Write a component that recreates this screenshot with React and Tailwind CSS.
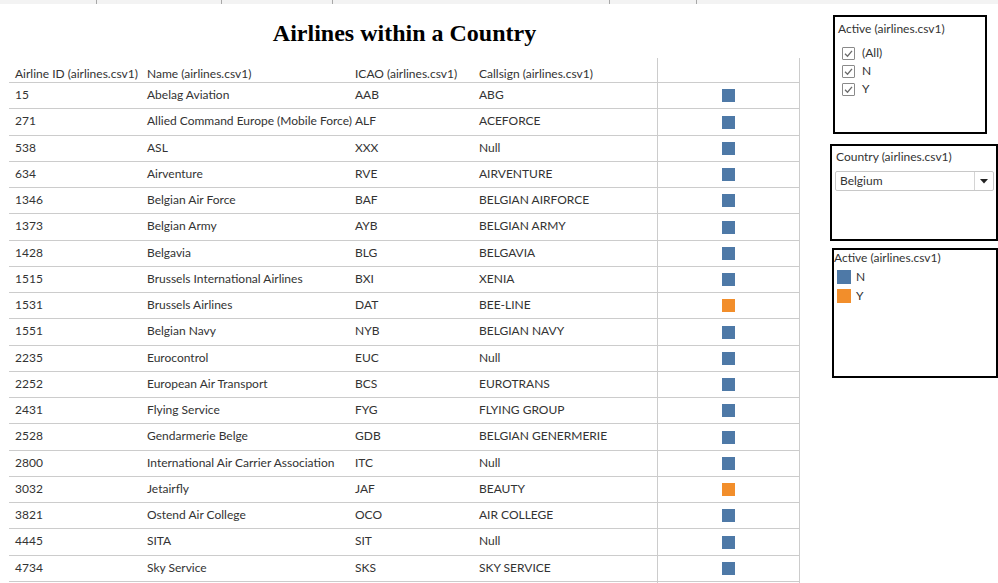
import React from 'react';

const rows = [
  ['15', 'Abelag Aviation', 'AAB', 'ABG', 'N'],
  ['271', 'Allied Command Europe (Mobile Force)', 'ALF', 'ACEFORCE', 'N'],
  ['538', 'ASL', 'XXX', 'Null', 'N'],
  ['634', 'Airventure', 'RVE', 'AIRVENTURE', 'N'],
  ['1346', 'Belgian Air Force', 'BAF', 'BELGIAN AIRFORCE', 'N'],
  ['1373', 'Belgian Army', 'AYB', 'BELGIAN ARMY', 'N'],
  ['1428', 'Belgavia', 'BLG', 'BELGAVIA', 'N'],
  ['1515', 'Brussels International Airlines', 'BXI', 'XENIA', 'N'],
  ['1531', 'Brussels Airlines', 'DAT', 'BEE-LINE', 'Y'],
  ['1551', 'Belgian Navy', 'NYB', 'BELGIAN NAVY', 'N'],
  ['2235', 'Eurocontrol', 'EUC', 'Null', 'N'],
  ['2252', 'European Air Transport', 'BCS', 'EUROTRANS', 'N'],
  ['2431', 'Flying Service', 'FYG', 'FLYING GROUP', 'N'],
  ['2528', 'Gendarmerie Belge', 'GDB', 'BELGIAN GENERMERIE', 'N'],
  ['2800', 'International Air Carrier Association', 'ITC', 'Null', 'N'],
  ['3032', 'Jetairfly', 'JAF', 'BEAUTY', 'Y'],
  ['3821', 'Ostend Air College', 'OCO', 'AIR COLLEGE', 'N'],
  ['4445', 'SITA', 'SIT', 'Null', 'N'],
  ['4734', 'Sky Service', 'SKS', 'SKY SERVICE', 'N'],
  ['', '', '', '', ''],
];

const Checkbox = ({ label }) => (
  <div className="flex items-center h-[18px]">
    <div className="w-[13px] h-[13px] border border-[#8a8a8a] rounded-[1px] bg-white flex items-center justify-center">
      <svg width="11" height="11" viewBox="0 0 11 11">
        <polyline points="2,5.8 4.5,8.2 9,2.8" fill="none" stroke="#6b6b6b" strokeWidth="1.3" />
      </svg>
    </div>
    <span className="ml-[7px]">{label}</span>
  </div>
);

const Row = ({ r, i }) => (
  <div
    className={`grid grid-cols-[138px_208px_124px_178px_143px] border-b border-[#cccccc] items-center ${
      i % 4 === 1 ? 'h-[27px]' : 'h-[26px]'
    }`}
  >
    <div className="pl-[6px] pb-[2px]">{r[0]}</div>
    <div className="whitespace-nowrap pb-[2px]">{r[1]}</div>
    <div className="pb-[2px]">{r[2]}</div>
    <div className="pb-[2px]">{r[3]}</div>
    <div className="h-full border-x border-[#cccccc] flex items-center justify-center">
      {r[4] === 'N' && <div className="w-[13px] h-[13px] bg-[#4e79a7]" />}
      {r[4] === 'Y' && <div className="w-[13px] h-[13px] bg-[#f28e2b]" />}
    </div>
  </div>
);

export default function App() {
  return (
    <div className="w-[998px] h-[583px] overflow-hidden bg-white text-[12px] leading-[14px] text-[#333333] font-['Lato',sans-serif]">
      {/* top toolbar strip */}
      <div className="h-[4px] bg-[#f3f3f3] flex">
        <div className="w-[97px] border-r border-[#a8a8a8]" />
        <div className="w-[125px] border-r border-[#a8a8a8]" />
        <div className="w-[111px] border-r border-[#a8a8a8]" />
        <div className="w-[277px] border-r border-[#a8a8a8]" />
        <div className="w-[87px] border-r border-[#a8a8a8]" />
      </div>

      <div className="flex">
        {/* worksheet */}
        <div className="w-[830px] pl-[9px]">
          <div className="w-[791px] mt-[16px] h-[38px] text-center font-['Liberation_Serif',serif] font-bold text-[24px] leading-[26px] text-black">
            Airlines within a Country
          </div>
          <div className="w-[791px]">
            <div className="grid grid-cols-[138px_208px_124px_178px_143px] h-[25px] border-b border-[#cccccc] items-end">
              <div className="pl-[6px] pb-[1px] whitespace-nowrap">Airline ID (airlines.csv1)</div>
              <div className="pb-[1px] whitespace-nowrap">Name (airlines.csv1)</div>
              <div className="pb-[1px] whitespace-nowrap">ICAO (airlines.csv1)</div>
              <div className="pb-[1px] whitespace-nowrap">Callsign (airlines.csv1)</div>
              <div className="h-full border-x border-[#cccccc]" />
            </div>
            {rows.map((r, i) => (
              <Row key={i} r={r} i={i} />
            ))}
          </div>
        </div>

        {/* filters & legend */}
        <div className="flex flex-col">
          <div className="ml-[3px] mt-[11px] w-[154px] h-[119px] border-2 border-black pl-[3px] pt-[5px]">
            <div className="whitespace-nowrap">Active (airlines.csv1)</div>
            <div className="pl-[4px] pt-[8px]">
              <Checkbox label="(All)" />
              <Checkbox label="N" />
              <Checkbox label="Y" />
            </div>
          </div>

          <div className="mt-[10px] w-[168px] h-[97px] border-2 border-black pt-[4px]">
            <div className="pl-[4px] whitespace-nowrap">Country (airlines.csv1)</div>
            <div className="ml-[3px] mr-[2px] mt-[7px] h-[20px] border border-[#c8c8c8] rounded-[2px] flex items-center">
              <div className="flex-1 pl-[4px]">Belgium</div>
              <div className="w-[19px] h-full border-l border-[#d4d4d4] flex items-center justify-center">
                <svg width="8" height="5" viewBox="0 0 8 5">
                  <polygon points="0,0 8,0 4,4.5" fill="#222222" />
                </svg>
              </div>
            </div>
          </div>

          <div className="ml-[2px] mt-[7px] w-[166px] h-[130px] border-2 border-black pt-[1px]">
            <div className="whitespace-nowrap">Active (airlines.csv1)</div>
            <div className="pl-[3px] pt-[2px]">
              <div className="flex items-center h-[19px]">
                <div className="w-[14px] h-[14px] bg-[#4e79a7]" />
                <span className="ml-[5px]">N</span>
              </div>
              <div className="flex items-center h-[19px]">
                <div className="w-[14px] h-[14px] bg-[#f28e2b]" />
                <span className="ml-[5px]">Y</span>
              </div>
            </div>
          </div>
        </div>
      </div>
    </div>
  );
}
